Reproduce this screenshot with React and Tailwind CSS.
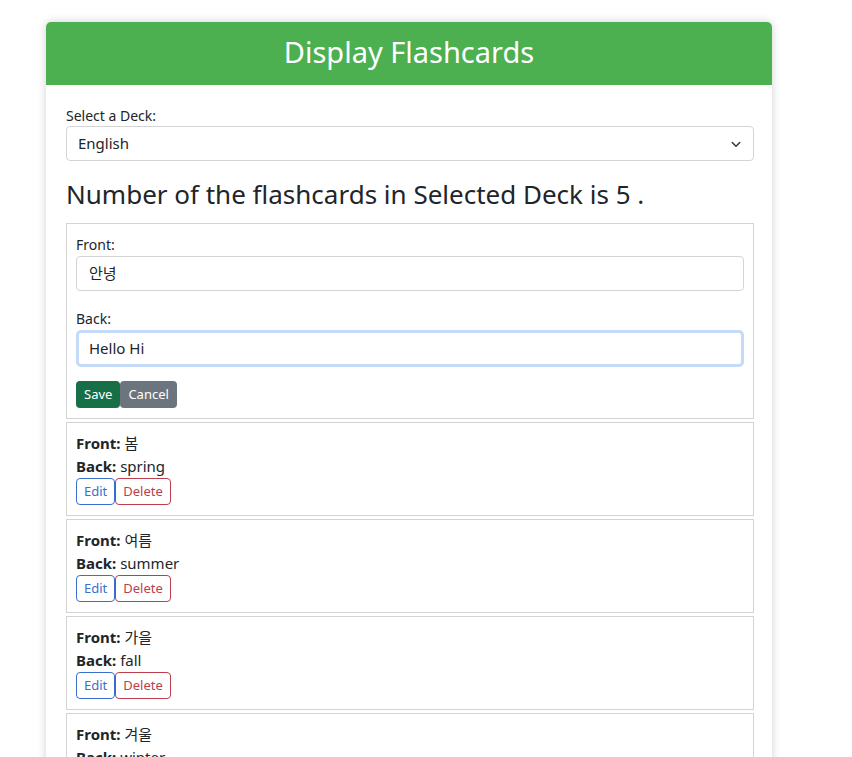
const cards = [
  { front: "봄", back: "spring" },
  { front: "여름", back: "summer" },
  { front: "가을", back: "fall" },
  { front: "겨울", back: "winter" },
  { front: "안녕", back: "hello" },
];

const font = { fontFamily: '"Noto Sans", "Noto Sans CJK KR", sans-serif' };

function CardRow({ card }) {
  return (
    <div className="border border-[#d4d4d4] px-[9px] pt-[9px] pb-[10px] text-[15px] leading-[23px] text-[#212529]">
      <div>
        <span className="font-bold">Front:</span> {card.front}
      </div>
      <div>
        <span className="font-bold">Back:</span> {card.back}
      </div>
      <div className="flex">
        <button className="h-[27px] rounded-[4px] border border-[#3b6fcc] px-[7px] text-[13px] text-[#3b6fcc]">
          Edit
        </button>
        <button className="h-[27px] rounded-[4px] border border-[#bb3e4d] px-[7px] text-[13px] text-[#bb3e4d]">
          Delete
        </button>
      </div>
    </div>
  );
}

export default function App() {
  return (
    <div className="min-h-[757px] bg-white pt-[22px]" style={font}>
      <div className="ml-[46px] w-[726px] overflow-hidden rounded-t-[5px] bg-white shadow-[0_0_10px_rgba(0,0,0,0.18)]">
        <div className="flex h-[63px] items-center justify-center bg-[#4caf50] pb-[4px] text-[29px] text-white">
          Display Flashcards
        </div>
        <div className="pl-[20px] pr-[18px] pt-[20px] pb-[20px]">
          <label className="block text-[14px] leading-[21px] text-[#212529]">Select a Deck:</label>
          <div className="flex h-[35px] items-center justify-between rounded-[4px] border border-[#d4d4d4] px-[11px] text-[15px] text-[#212529]">
            <span>English</span>
            <svg width="12" height="12" viewBox="0 0 16 16" fill="none" stroke="#343a40" strokeWidth="2" strokeLinecap="round" strokeLinejoin="round">
              <path d="M3 6l5 5 5-5" />
            </svg>
          </div>
          <h2 className="mt-[16px] mb-[12px] text-[26px] leading-[34px] text-[#212529]">
            Number of the flashcards in Selected Deck is 5 .
          </h2>
          <div className="flex flex-col gap-[3px]">
            <div className="border border-[#d4d4d4] px-[9px] pt-[10px] pb-[10px] text-[#212529]">
              <label className="block text-[14px] leading-[22px]">Front:</label>
              <div className="flex h-[35px] items-center rounded-[4px] border border-[#d4d4d4] px-[12px] text-[15px]">
                안녕
              </div>
              <label className="mt-[17px] block text-[14px] leading-[22px]">Back:</label>
              <div className="flex h-[37px] items-center rounded-[5px] border-[3px] border-[#c5daf7] px-[10px] text-[15px]">
                Hello Hi
              </div>
              <div className="mt-[14px] flex">
                <button className="h-[27px] rounded-[4px] bg-[#176f48] px-[8px] text-[13px] text-white">Save</button>
                <button className="h-[27px] rounded-[4px] bg-[#6c757d] px-[8px] text-[13px] text-white">Cancel</button>
              </div>
            </div>
            {cards.map((c) => (
              <CardRow key={c.front} card={c} />
            ))}
          </div>
        </div>
      </div>
    </div>
  );
}
